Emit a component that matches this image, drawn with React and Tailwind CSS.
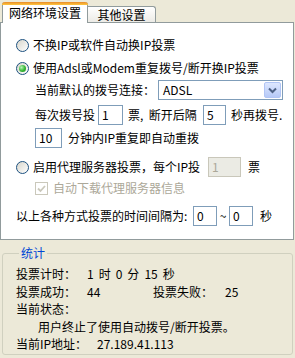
import React from 'react';

function Radio({ checked }) {
  return (
    <span className="flex items-center justify-center w-[13px] h-[13px] shrink-0 rounded-full border border-[#1c5180] bg-linear-to-br from-[#d8d6cc] to-white">
      {checked && (
        <span className="w-[7px] h-[7px] rounded-full bg-[radial-gradient(circle_at_35%_35%,#b6f5b6,#34b534_55%,#1e8f1e)]" />
      )}
    </span>
  );
}

function Field({ value, className = '', disabled = false }) {
  return (
    <span
      className={`flex items-center h-[20px] pl-[3px] border shrink-0 ${
        disabled ? 'border-[#c9c7ba] bg-[#ebebe4] text-[#aca899]' : 'border-[#7f9db9] bg-white'
      } ${className}`}
    >
      {value}
    </span>
  );
}

export default function App() {
  return (
    <div className="w-[295px] h-[358px] bg-[#ece9d8] overflow-hidden text-[12px] leading-[14px] text-black font-['Noto_Sans_CJK_SC',sans-serif]">
      {/* tab strip */}
      <div className="flex items-end h-[22px] pl-[2px]">
        <div className="relative z-10 -mb-px h-[21px] w-[86px] bg-white border-x border-[#919b9c] rounded-t-[3px] flex flex-col">
          <div className="h-[3px] -mx-px rounded-t-[3px] bg-linear-to-b from-[#e68b2c] to-[#ffc73c]" />
          <div className="flex-1 flex items-center justify-center pb-[3px]">网络环境设置</div>
        </div>
        <div className="h-[16px] w-[68px] border-t border-r border-[#919b9c] rounded-tr-[3px] bg-linear-to-b from-white to-[#ecebe6] flex items-center justify-center">
          其他设置
        </div>
      </div>

      {/* tab page */}
      <div className="h-[218px] w-[294px] bg-white border border-[#919b9c] pl-[15px]">
        <div className="flex items-center h-[20px] mt-[12px]">
          <Radio />
          <span className="ml-[4px]">不换IP或软件自动换IP投票</span>
        </div>

        <div className="flex items-center h-[20px] mt-[3px]">
          <Radio checked />
          <span className="ml-[4px]">使用Adsl或Modem重复拨号/断开换IP投票</span>
        </div>

        <div className="flex items-center h-[20px] mt-[2px] pl-[19px]">
          <span className="w-[120px]">当前默认的拨号连接：</span>
          <span className="ml-[3px] flex items-center h-[20px] w-[125px] border border-[#7f9db9] bg-white pl-[4px] pr-px">
            <span className="flex-1">ADSL</span>
            <span className="flex items-center justify-center w-[17px] h-[16px] rounded-[2px] border border-[#b1c5f5] bg-linear-to-b from-[#dde7fe] to-[#b6c9f7]">
              <svg width="9" height="7" viewBox="0 0 9 7">
                <path d="M1 1.5 L4.5 5 L8 1.5" fill="none" stroke="#4d6185" strokeWidth="2" />
              </svg>
            </span>
          </span>
        </div>

        <div className="flex items-center h-[20px] mt-[5px] pl-[19px]">
          <span className="w-[60px]">每次拨号投</span>
          <Field value="1" className="ml-[3px] w-[25px]" />
          <span className="ml-[5px] w-[72px] whitespace-pre">票,  断开后隔</span>
          <Field value="5" className="ml-[3px] w-[23px]" />
          <span className="ml-[5px]">秒再拨号.</span>
        </div>

        <div className="flex items-center h-[20px] mt-[3px] pl-[19px]">
          <Field value="10" className="w-[27px]" />
          <span className="ml-[6px]">分钟内IP重复即自动重拨</span>
        </div>

        <div className="flex items-center h-[20px] mt-[9px]">
          <Radio />
          <span className="ml-[4px] w-[172px]">启用代理服务器投票，每个IP投</span>
          <Field value="1" disabled className="ml-[3px] w-[33px]" />
          <span className="ml-[7px]">票</span>
        </div>

        <div className="flex items-center h-[20px] mt-px pl-[19px]">
          <span className="flex items-center justify-center w-[13px] h-[13px] border border-[#cac8bb] bg-white">
            <svg width="9" height="9" viewBox="0 0 9 9">
              <path d="M1 4.5 L3.5 7 L8 2" fill="none" stroke="#cac8bb" strokeWidth="1.8" />
            </svg>
          </span>
          <span className="ml-[5px] text-[#aca899]">自动下载代理服务器信息</span>
        </div>

        <div className="flex items-center h-[20px] mt-[8px]">
          <span className="w-[177px]">以上各种方式投票的时间间隔为:</span>
          <Field value="0" className="w-[24px]" />
          <span className="w-[12px] text-center">~</span>
          <Field value="0" className="w-[24px]" />
          <span className="ml-[7px]">秒</span>
        </div>
      </div>

      {/* statistics group */}
      <fieldset className="mt-[6px] mx-[2px] h-[109px] border border-[#d0d0bf] rounded-[3px] pl-[13px] pt-[5px]">
        <legend className="ml-[3px] px-[2px] text-[#0046d5]">统计</legend>
        <div className="leading-[17.5px]">
          <div className="flex">
            <span className="w-[71px]">投票计时：</span>
            <span className="flex gap-[5px]">
              <span>1</span><span>时</span><span>0</span><span>分</span><span>15</span><span>秒</span>
            </span>
          </div>
          <div className="flex">
            <span className="w-[71px]">投票成功：</span>
            <span className="w-[66px]">44</span>
            <span className="w-[72px]">投票失败：</span>
            <span>25</span>
          </div>
          <div>当前状态：</div>
          <div className="pl-[22px]">用户终止了使用自动拨号/断开投票。</div>
          <div className="flex">
            <span className="w-[81px]">当前IP地址：</span>
            <span>27.189.41.113</span>
          </div>
        </div>
      </fieldset>
    </div>
  );
}
